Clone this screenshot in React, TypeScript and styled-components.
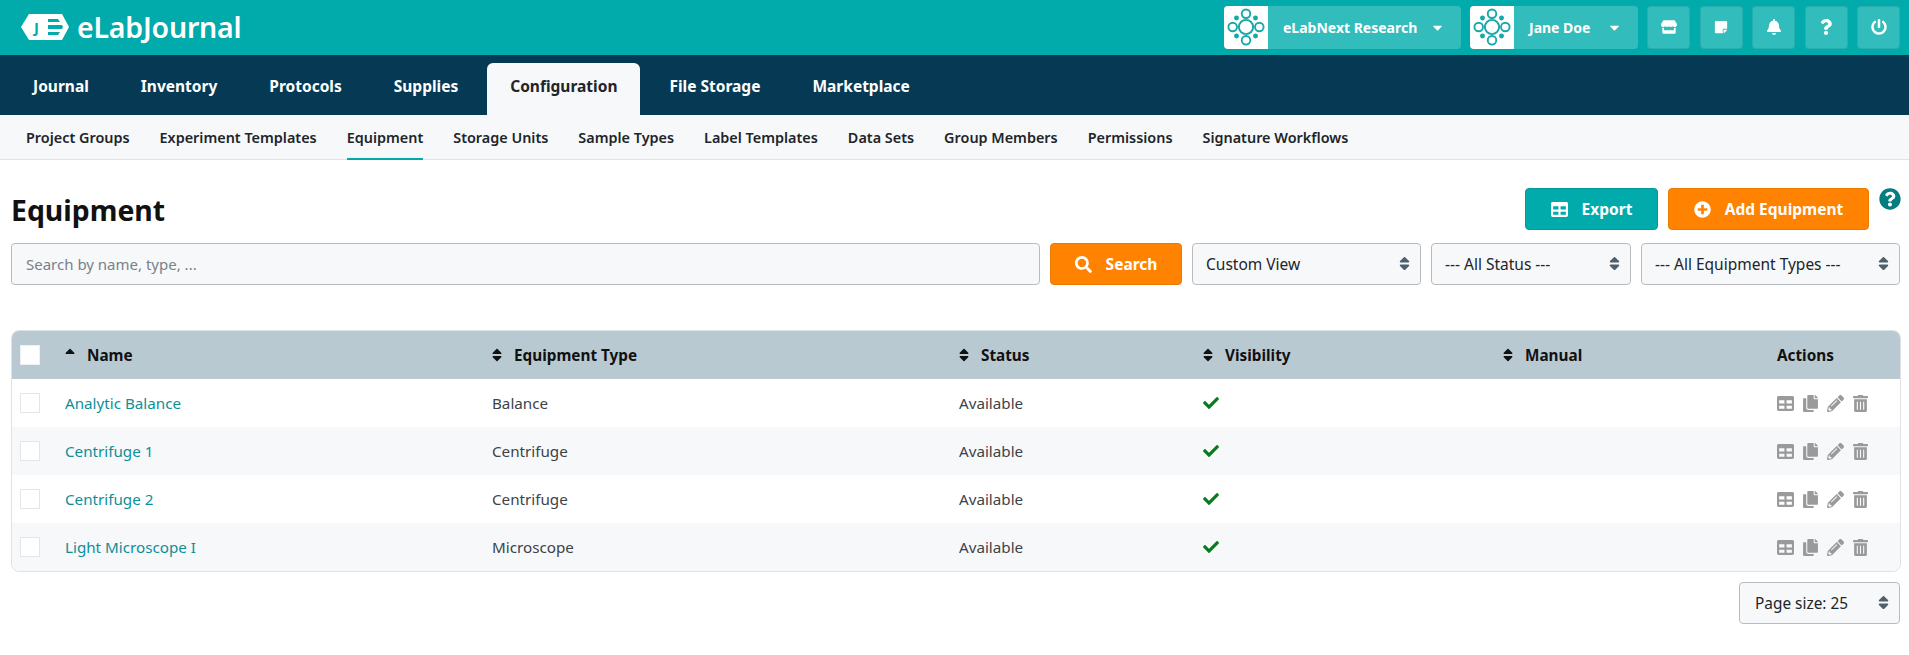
import React from "react";
import styled, { createGlobalStyle } from "styled-components";
import {
  FaStore, FaStickyNote, FaBell, FaQuestion, FaPowerOff, FaTable, FaPlusCircle, FaSearch,
  FaCheck, FaCopy, FaPencilAlt, FaTrashAlt, FaQuestionCircle, FaSort, FaSortUp, FaCaretDown,
} from "react-icons/fa";

const Global = createGlobalStyle`
  html, body { margin: 0; padding: 0; background: #fff; }
  body { font-family: "Noto Sans", "Open Sans", sans-serif; font-size: 15px; color: #212529; }
  * { box-sizing: border-box; }
`;

const Page = styled.div`
  width: 1909px;
  height: 655px;
  overflow: hidden;
`;

const TopBar = styled.header`
  height: 55px;
  background: #02abab;
  display: flex;
  align-items: center;
  padding: 0 9px 1px 20px;
`;

const Brand = styled.div`
  display: flex;
  align-items: center;
  gap: 7px;
  flex: 1;
  color: #fff;
  font-size: 28.5px;
  font-weight: 600;
  letter-spacing: -0.2px;
`;

const TopActions = styled.div`
  display: flex;
  align-items: center;
`;

const Switcher = styled.div<{ $width: number }>`
  width: ${(p) => p.$width}px;
  height: 43px;
  margin-right: 9px;
  display: flex;
  align-items: center;
  border-radius: 4px;
  overflow: hidden;
  background: #33bcbc;
  color: #fff;
  font-size: 14px;
  font-weight: 700;
`;

const SwitcherLogo = styled.span`
  width: 44px;
  height: 43px;
  background: #fff;
  display: flex;
  align-items: center;
  justify-content: center;
`;

const SwitcherLabel = styled.span`
  flex: 1;
  padding-left: 15px;
  white-space: nowrap;
`;

const SwitcherCaret = styled.span`
  display: flex;
  width: 31px;
  font-size: 15px;
`;

const IconButton = styled.button`
  width: 43px;
  height: 43px;
  margin-right: 9.5px;
  padding: 0;
  border: 1px solid rgba(0, 110, 110, 0.18);
  border-radius: 4px;
  background: #33bcbc;
  color: #fff;
  display: flex;
  align-items: center;
  justify-content: center;
  font-size: 16px;
  &:last-child { margin-right: 0; }
`;

const MainNav = styled.nav`
  height: 60px;
  background: #063a54;
  display: flex;
  align-items: flex-end;
  padding-left: 10px;
  gap: 6px;
`;

const MainTab = styled.a<{ $active?: boolean }>`
  height: 52px;
  padding: 0 23px 6px;
  display: flex;
  align-items: center;
  font-size: 15.5px;
  font-weight: 700;
  border-radius: 6px 6px 0 0;
  color: ${(p) => (p.$active ? "#212529" : "#fff")};
  background: ${(p) => (p.$active ? "#f7f8fa" : "transparent")};
`;

const SubNav = styled.nav`
  height: 45px;
  background: #f7f8fa;
  border-bottom: 1px solid #dfe2e6;
  display: flex;
  padding-left: 26px;
  gap: 30px;
`;

const SubTab = styled.a<{ $active?: boolean }>`
  height: 45px;
  padding-top: 2px;
  display: flex;
  align-items: center;
  font-size: 14.4px;
  font-weight: 600;
  color: #212529;
  border-bottom: 2px solid ${(p) => (p.$active ? "#02abab" : "transparent")};
`;

const Content = styled.main`
  padding: 28px 8px 0 11px;
`;

const TitleRow = styled.div`
  display: flex;
  align-items: flex-start;
  height: 55px;
`;

const Title = styled.h1`
  flex: 1;
  margin: 0;
  font-size: 28.4px;
  line-height: 44px;
  font-weight: 700;
  color: #111;
`;

const Button = styled.button<{ $tone: "teal" | "orange"; $width: number }>`
  width: ${(p) => p.$width}px;
  height: 42px;
  border-radius: 4px;
  border: 1px solid ${(p) => (p.$tone === "teal" ? "#029a9a" : "#e87b00")};
  background: ${(p) => (p.$tone === "teal" ? "#02abab" : "#ff8200")};
  color: #fff;
  font: 700 15.5px "Noto Sans", sans-serif;
  display: flex;
  align-items: center;
  justify-content: center;
  gap: 14px;
  padding: 0;
  & svg { font-size: 17px; }
`;

const HeadActions = styled.div`
  display: flex;
  gap: 10px;
`;

const HelpIcon = styled.span`
  color: #047d80;
  font-size: 22px;
  display: flex;
`;

const FilterRow = styled.div`
  display: flex;
  gap: 10px;
  height: 42px;
  margin-right: 1px;
`;

const SearchInput = styled.input`
  width: 1029px;
  height: 42px;
  padding: 0 14px;
  border: 1px solid #b9bcbf;
  border-radius: 4px;
  background: #f7f8fa;
  font: 15px "Noto Sans", sans-serif;
  &::placeholder { color: #78828a; opacity: 1; }
`;

const SelectWrap = styled.div<{ $width: number }>`
  position: relative;
  width: ${(p) => p.$width}px;
  height: 42px;
`;

const Select = styled.select`
  width: 100%;
  height: 100%;
  appearance: none;
  padding: 0 26px 0 13px;
  border: 1px solid #b9bcbf;
  border-radius: 4px;
  background: #f7f8fa;
  color: #212529;
  font: 15.5px "Noto Sans", sans-serif;
`;

const SelectArrow = styled.span`
  position: absolute;
  right: 8px;
  top: 12px;
  display: flex;
  color: #50606b;
  font-size: 17px;
  pointer-events: none;
`;

const TableFrame = styled.div`
  margin-top: 45px;
  width: 1890px;
  border: 1px solid #dfe2e6;
  border-radius: 8px;
  overflow: hidden;
`;

const Table = styled.table`
  width: 100%;
  border-collapse: collapse;
  table-layout: fixed;
`;

const HeadRow = styled.tr`
  height: 48px;
  background: #b9c9d1;
  color: #111;
`;

const HeadCell = styled.th<{ $width?: number }>`
  width: ${(p) => (p.$width ? `${p.$width}px` : "auto")};
  padding: 0;
  text-align: left;
  font-size: 15.3px;
  font-weight: 700;
`;

const HeadInner = styled.span`
  display: flex;
  align-items: center;
  gap: 9px;
`;

const SortIcon = styled.span`
  display: flex;
  margin-left: -3px;
  font-size: 16px;
  color: #111;
`;

const Row = styled.tr<{ $alt?: boolean }>`
  height: 48px;
  background: ${(p) => (p.$alt ? "#f7f8fa" : "#fff")};
`;

const Cell = styled.td`
  padding: 0;
  font-size: 15.2px;
  color: #3c4348;
`;

const Box = styled.span<{ $head?: boolean }>`
  display: block;
  width: 20px;
  height: 20px;
  margin-left: 8px;
  background: #fff;
  border: 1px solid ${(p) => (p.$head ? "#eef1f3" : "#e3e6e8")};
`;

const NameLink = styled.a`
  color: #0e8f97;
`;

const Check = styled.span`
  display: flex;
  color: #0a7a1e;
  font-size: 16px;
`;

const RowActions = styled.span`
  display: flex;
  align-items: center;
  gap: 8px;
  color: #9a9a9a;
  font-size: 17px;
`;

const Footer = styled.div`
  display: flex;
  justify-content: flex-end;
  margin-top: 10px;
  margin-right: 1px;
`;

const PageSizeSelect = styled(Select)`
  padding-left: 15px;
  font-size: 15.4px;
`;

const NetworkLogo = () => (
  <svg width="38" height="38" viewBox="0 0 40 40" fill="none" stroke="#17a9a9" strokeWidth="2">
    <circle cx="20" cy="20" r="7.5" />
    <circle cx="20" cy="6" r="4.5" />
    <circle cx="20" cy="34" r="4.5" />
    <circle cx="6" cy="20" r="4.5" />
    <circle cx="34" cy="20" r="4.5" />
    <g fill="#17a9a9" stroke="none">
      <circle cx="10" cy="10.5" r="2.6" />
      <circle cx="30" cy="10.5" r="2.6" />
      <circle cx="10" cy="29.5" r="2.6" />
      <circle cx="30" cy="29.5" r="2.6" />
    </g>
  </svg>
);

const BrandMark = () => (
  <svg width="50" height="28" viewBox="0 0 50 28">
    <path d="M9 1H42L49 14L42 27H9L1 14Z" fill="#fff" />
    <text x="14" y="20" fontFamily="Noto Sans, sans-serif" fontWeight="700" fontSize="15" fill="#02abab">J</text>
    <path d="M28 6H38L40 9H28ZM28 12H42L43 14L42 16H28ZM28 19H40L38 22H28Z" fill="#02abab" />
  </svg>
);

const mainTabs = ["Journal", "Inventory", "Protocols", "Supplies", "Configuration", "File Storage", "Marketplace"];
const subTabs = ["Project Groups", "Experiment Templates", "Equipment", "Storage Units", "Sample Types", "Label Templates", "Data Sets", "Group Members", "Permissions", "Signature Workflows"];
const rows = [
  ["Analytic Balance", "Balance"],
  ["Centrifuge 1", "Centrifuge"],
  ["Centrifuge 2", "Centrifuge"],
  ["Light Microscope I", "Microscope"],
];

const Choice = ({ width, label }: { width: number; label: string }) => (
  <SelectWrap $width={width}>
    <Select defaultValue={label}><option>{label}</option></Select>
    <SelectArrow><FaSort /></SelectArrow>
  </SelectWrap>
);

const SortHead = ({ width, label, up }: { width: number; label: string; up?: boolean }) => (
  <HeadCell $width={width}>
    <HeadInner>
      <SortIcon>{up ? <FaSortUp /> : <FaSort />}</SortIcon>
      {label}
    </HeadInner>
  </HeadCell>
);

export default function App() {
  return (
    <Page>
      <Global />
      <TopBar>
        <Brand><BrandMark />eLabJournal</Brand>
        <TopActions>
          <Switcher $width={237}>
            <SwitcherLogo><NetworkLogo /></SwitcherLogo>
            <SwitcherLabel>eLabNext Research</SwitcherLabel>
            <SwitcherCaret><FaCaretDown /></SwitcherCaret>
          </Switcher>
          <Switcher $width={168}>
            <SwitcherLogo><NetworkLogo /></SwitcherLogo>
            <SwitcherLabel>Jane Doe</SwitcherLabel>
            <SwitcherCaret><FaCaretDown /></SwitcherCaret>
          </Switcher>
          <IconButton><FaStore /></IconButton>
          <IconButton><FaStickyNote size={14} /></IconButton>
          <IconButton><FaBell /></IconButton>
          <IconButton><FaQuestion /></IconButton>
          <IconButton><FaPowerOff /></IconButton>
        </TopActions>
      </TopBar>
      <MainNav>
        {mainTabs.map((t) => <MainTab key={t} $active={t === "Configuration"}>{t}</MainTab>)}
      </MainNav>
      <SubNav>
        {subTabs.map((t) => <SubTab key={t} $active={t === "Equipment"}>{t}</SubTab>)}
      </SubNav>
      <Content>
        <TitleRow>
          <Title>Equipment</Title>
          <HeadActions>
            <Button $tone="teal" $width={133}><FaTable />Export</Button>
            <Button $tone="orange" $width={201}><FaPlusCircle />Add Equipment</Button>
            <HelpIcon><FaQuestionCircle /></HelpIcon>
          </HeadActions>
        </TitleRow>
        <FilterRow>
          <SearchInput placeholder="Search by name, type, ..." />
          <Button $tone="orange" $width={132}><FaSearch />Search</Button>
          <Choice width={229} label="Custom View" />
          <Choice width={200} label="--- All Status ---" />
          <Choice width={259} label="--- All Equipment Types ---" />
        </FilterRow>
        <TableFrame>
          <Table>
            <thead>
              <HeadRow>
                <HeadCell $width={53}><Box $head /></HeadCell>
                <SortHead width={427} label="Name" up />
                <SortHead width={467} label="Equipment Type" />
                <SortHead width={244} label="Status" />
                <SortHead width={300} label="Visibility" />
                <SortHead width={274} label="Manual" />
                <HeadCell>Actions</HeadCell>
              </HeadRow>
            </thead>
            <tbody>
              {rows.map(([name, type], i) => (
                <Row key={name} $alt={i % 2 === 1}>
                  <Cell><Box /></Cell>
                  <Cell><NameLink>{name}</NameLink></Cell>
                  <Cell>{type}</Cell>
                  <Cell>Available</Cell>
                  <Cell><Check><FaCheck /></Check></Cell>
                  <Cell />
                  <Cell>
                    <RowActions><FaTable /><FaCopy /><FaPencilAlt /><FaTrashAlt /></RowActions>
                  </Cell>
                </Row>
              ))}
            </tbody>
          </Table>
        </TableFrame>
        <Footer>
          <SelectWrap $width={161}>
            <PageSizeSelect defaultValue="Page size: 25"><option>Page size: 25</option></PageSizeSelect>
            <SelectArrow><FaSort /></SelectArrow>
          </SelectWrap>
        </Footer>
      </Content>
    </Page>
  );
}
